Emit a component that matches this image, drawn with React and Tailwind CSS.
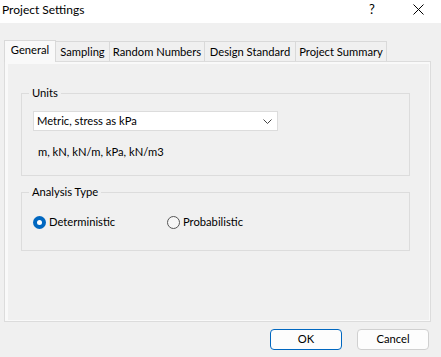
import React, { useState } from 'react';

const tabs = [
  { name: 'General', w: 'w-[52px]' },
  { name: 'Sampling', w: 'w-[54px]' },
  { name: 'Random Numbers', w: 'w-[95px]' },
  { name: 'Design Standard', w: 'w-[91px]' },
  { name: 'Project Summary', w: 'w-[91px]' }
];

const Radio = ({ checked, label, onClick }) => (
  <button type="button" onClick={onClick} className="flex items-center h-[16px]">
    {checked ? (
      <span className="w-[13px] h-[13px] rounded-full bg-[#0067c0] flex items-center justify-center">
        <span className="w-[5px] h-[5px] rounded-full bg-white" />
      </span>
    ) : (
      <span className="w-[13px] h-[13px] rounded-full border border-[#555555] bg-[#f6f6f6]" />
    )}
    <span className="ml-[3px]">{label}</span>
  </button>
);

export default function App() {
  const [activeTab, setActiveTab] = useState(0);
  const [analysis, setAnalysis] = useState('det');

  return (
    <div
      className="w-[441px] h-[357px] bg-[#f0f0f0] flex flex-col text-[11.2px] text-black overflow-hidden"
      style={{ fontFamily: 'Lato, "Liberation Sans", sans-serif' }}
    >
      {/* Title bar */}
      <div className="h-[23px] bg-white flex items-center pl-[2px] shrink-0">
        <span className="flex-1 -mt-[3px] text-[12px]">Project Settings</span>
        <span className="w-[8px] -mt-[3px] text-[13px]">?</span>
        <svg className="ml-[36px] mr-[17px] -mt-[5px]" width="11" height="11" viewBox="0 0 11 11">
          <path d="M0.5 0.5 L10.5 10.5 M10.5 0.5 L0.5 10.5" stroke="#000" strokeWidth="1" />
        </svg>
      </div>

      {/* Tabs */}
      <div className="mt-[16px] pl-[4px] flex items-end h-[22px]">
        {tabs.map((t, i) =>
          i === activeTab ? (
            <button
              key={t.name}
              onClick={() => setActiveTab(i)}
              className={`${t.w} shrink-0 whitespace-nowrap h-[22px] bg-[#f9f9f9] border border-b-0 border-[#d9d9d9] pb-[3px] relative z-10 -mb-px`}
            >
              {t.name}
            </button>
          ) : (
            <button
              key={t.name}
              onClick={() => setActiveTab(i)}
              className={`${t.w} shrink-0 whitespace-nowrap h-[20px] bg-[#f0f0f0] border border-b-0 border-l-0 border-[#d9d9d9] leading-none`}
            >
              {t.name}
            </button>
          )
        )}
      </div>

      {/* Panel */}
      <div className="ml-[4px] w-[427px] h-[261px] border border-[#dcdcdc] bg-[#f9f9f9] pl-[3px] pt-[2px] pr-[1px] pb-[1px]">
        <div className="w-full h-full bg-[#f0f0f0] pl-[13px] pt-[21px]">
          <fieldset className="w-[389px] border border-[#dcdcdc] px-[11px] pb-[15px]">
            <legend className="ml-[-4px] px-[3px] leading-[16px]">Units</legend>
            <button className="mt-[10px] w-[245px] h-[20px] bg-white border border-[#dcdcdc] flex items-center pl-[3px] pr-[5px]">
              <span className="flex-1 text-left">Metric, stress as kPa</span>
              <svg width="9" height="5" viewBox="0 0 9 5">
                <path d="M0.5 0.5 L4.5 4.5 L8.5 0.5" stroke="#444" fill="none" strokeWidth="1" />
              </svg>
            </button>
            <div className="mt-[13px] pl-[5px] leading-[16px]">m, kN, kN/m, kPa, kN/m3</div>
          </fieldset>

          <fieldset className="mt-[8px] w-[389px] border border-[#dcdcdc] px-[11px] pb-[20px]">
            <legend className="ml-[-4px] px-[3px] leading-[16px]">Analysis Type</legend>
            <div className="mt-[14px] flex items-center">
              <div className="w-[134px]">
                <Radio checked={analysis === 'det'} label="Deterministic" onClick={() => setAnalysis('det')} />
              </div>
              <Radio checked={analysis === 'prob'} label="Probabilistic" onClick={() => setAnalysis('prob')} />
            </div>
          </fieldset>
        </div>
      </div>

      {/* Buttons */}
      <div className="mt-[7px] flex justify-end gap-[15px] pr-[12px]">
        <button className="w-[72px] h-[21px] rounded-[4px] border border-[#0067c0] bg-[#fdfdfd]">OK</button>
        <button className="w-[72px] h-[21px] rounded-[4px] border border-[#d0d0d0] bg-[#fdfdfd]">Cancel</button>
      </div>
    </div>
  );
}
